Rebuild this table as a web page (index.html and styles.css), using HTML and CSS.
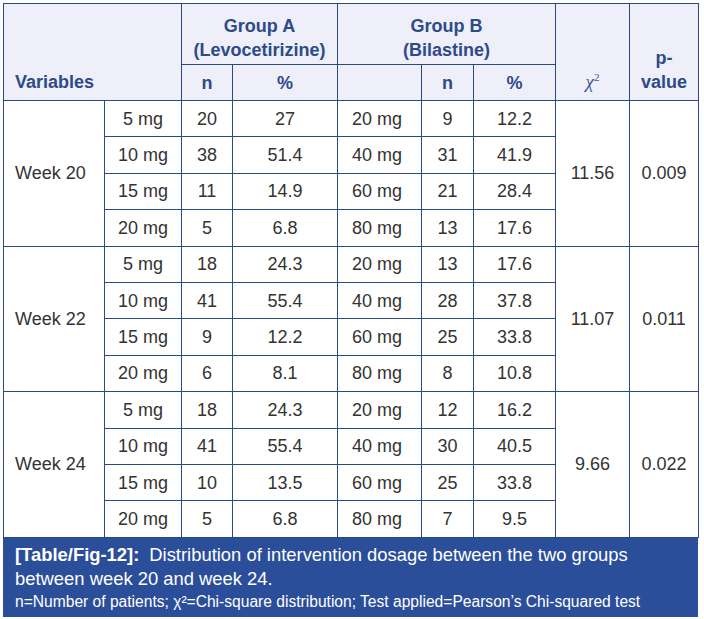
FILE: index.html
```html
<!DOCTYPE html>
<html>
<head>
<meta charset="utf-8">
<link rel="stylesheet" href="styles.css">
</head>
<body>
<div class="figure">
<table class="data">
<colgroup>
<col class="c-var"><col class="c-dose"><col class="c-n"><col class="c-pct"><col class="c-doseb"><col class="c-nb"><col class="c-pctb"><col class="c-chi"><col class="c-p">
</colgroup>
<thead>
<tr class="h1">
<th class="left bottom" colspan="2" rowspan="2">Variables</th>
<th colspan="2">Group A<br>(Levocetirizine)</th>
<th colspan="3">Group B<br>(Bilastine)</th>
<th class="chi bottom" rowspan="2">χ<sup>2</sup></th>
<th class="bottom" rowspan="2">p-<br>value</th>
</tr>
<tr class="h2">
<th>n</th><th>%</th><th></th><th>n</th><th>%</th>
</tr>
</thead>
<tbody>
<tr><td class="week" rowspan="4">Week 20</td><td>5 mg</td><td>20</td><td>27</td><td class="doseb">20 mg</td><td>9</td><td>12.2</td><td rowspan="4">11.56</td><td rowspan="4">0.009</td></tr>
<tr><td>10 mg</td><td>38</td><td>51.4</td><td class="doseb">40 mg</td><td>31</td><td>41.9</td></tr>
<tr><td>15 mg</td><td>11</td><td>14.9</td><td class="doseb">60 mg</td><td>21</td><td>28.4</td></tr>
<tr><td>20 mg</td><td>5</td><td>6.8</td><td class="doseb">80 mg</td><td>13</td><td>17.6</td></tr>
<tr><td class="week" rowspan="4">Week 22</td><td>5 mg</td><td>18</td><td>24.3</td><td class="doseb">20 mg</td><td>13</td><td>17.6</td><td rowspan="4">11.07</td><td rowspan="4">0.011</td></tr>
<tr><td>10 mg</td><td>41</td><td>55.4</td><td class="doseb">40 mg</td><td>28</td><td>37.8</td></tr>
<tr><td>15 mg</td><td>9</td><td>12.2</td><td class="doseb">60 mg</td><td>25</td><td>33.8</td></tr>
<tr><td>20 mg</td><td>6</td><td>8.1</td><td class="doseb">80 mg</td><td>8</td><td>10.8</td></tr>
<tr><td class="week" rowspan="4">Week 24</td><td>5 mg</td><td>18</td><td>24.3</td><td class="doseb">20 mg</td><td>12</td><td>16.2</td><td rowspan="4">9.66</td><td rowspan="4">0.022</td></tr>
<tr><td>10 mg</td><td>41</td><td>55.4</td><td class="doseb">40 mg</td><td>30</td><td>40.5</td></tr>
<tr><td>15 mg</td><td>10</td><td>13.5</td><td class="doseb">60 mg</td><td>25</td><td>33.8</td></tr>
<tr><td>20 mg</td><td>5</td><td>6.8</td><td class="doseb">80 mg</td><td>7</td><td>9.5</td></tr>
</tbody>
</table>
<div class="caption">
<p class="title"><b class="label">[Table/Fig-12]:</b><span class="gap"></span>Distribution of intervention dosage between the two groups between week 20 and week 24.</p>
<p class="note">n=Number of patients; χ²=Chi-square distribution; Test applied=Pearson’s Chi-squared test</p>
</div>
</div>
</body>
</html>
```
FILE: styles.css
```css
html, body {
  margin: 0;
  padding: 0;
  background: #ffffff;
}
body {
  font-family: "Liberation Sans", Arial, sans-serif;
}
.figure {
  padding: 3px 0 0 3px;
  width: 695px;
}
.data {
  border-collapse: collapse;
  table-layout: fixed;
  width: 695px;
  color: #333333;
  font-size: 18px;
}
.c-var { width: 101px; }
.c-dose { width: 77px; }
.c-n { width: 51px; }
.c-pct { width: 105px; }
.c-doseb { width: 84px; }
.c-nb { width: 52px; }
.c-pctb { width: 82px; }
.c-chi { width: 74px; }
.c-p { width: 69px; }
.data th, .data td {
  border: 1px solid #2a4a82;
  padding: 0;
  text-align: center;
}
.data thead th {
  background: #eeeff8;
  color: #2d4a8a;
  font-weight: bold;
  font-size: 18px;
  line-height: 24px;
}
.data .h1 th {
  height: 61px;
  vertical-align: middle;
  padding-top: 8px;
  box-sizing: border-box;
}
.data .h1 th.bottom {
  vertical-align: bottom;
  padding-bottom: 6px;
  padding-top: 0;
}
.data .h1 th.left {
  text-align: left;
  padding-left: 11px;
}
.data .h2 th {
  height: 35px;
}
.data th.chi {
  font-family: "Liberation Serif", "Times New Roman", serif;
  font-weight: normal;
  font-style: italic;
  color: #3b5594;
  font-size: 19px;
  padding-bottom: 4px;
}
.data th.chi sup {
  font-size: 11px;
  font-style: normal;
}
.data td {
  height: 35.4px;
  line-height: 20px;
}
.data td.week {
  text-align: left;
  padding-left: 11px;
}
.data td.doseb {
  text-align: left;
  padding-left: 14px;
}
.caption {
  background: #2b4e9b;
  color: #ffffff;
  width: 695px;
  height: 79px;
  box-sizing: border-box;
  padding: 5px 10px 0 12px;
}
.caption p {
  margin: 0;
}
.caption .title {
  font-size: 18.4px;
  line-height: 24px;
}
.caption .gap {
  display: inline-block;
  width: 10px;
}
.caption .note {
  font-size: 15.6px;
  line-height: 22px;
}
```
